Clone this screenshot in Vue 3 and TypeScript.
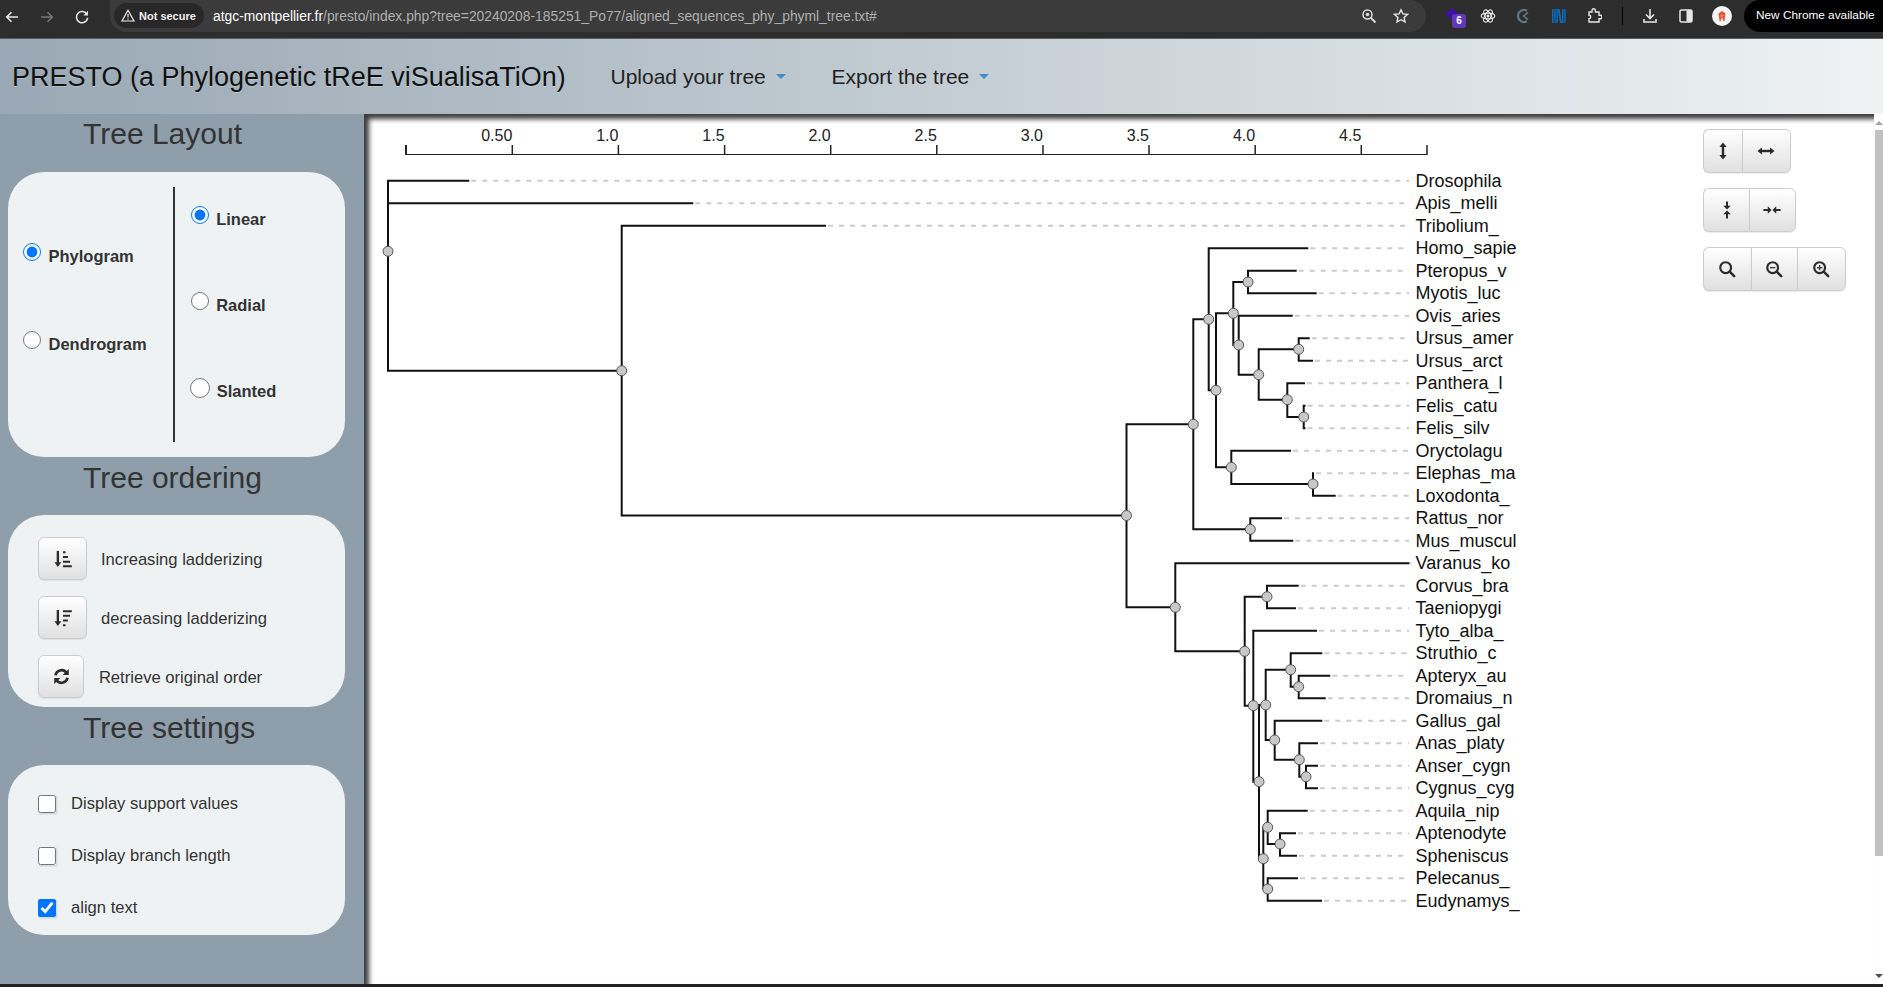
<script setup lang="ts">
interface Inner { id: string; x: number; y: number; parent: string | null }
interface Leaf { name: string; tip: number; parent: string }

const ROW0 = 180.7
const ROW = 22.5
const DASH_END = 1409

const inner: Inner[] = [
  { id: 'root', x: 388, y: 251.3, parent: null },
  { id: 'n1', x: 621.7, y: 370.7, parent: 'root' },
  { id: 'n3', x: 1126.5, y: 515.5, parent: 'n1' },
  { id: 'n4', x: 1193.3, y: 424.3, parent: 'n3' },
  { id: 'a', x: 1208.7, y: 319.3, parent: 'n4' },
  { id: 'b', x: 1216, y: 390.3, parent: 'a' },
  { id: 'c', x: 1233.3, y: 313.3, parent: 'b' },
  { id: 'e', x: 1248, y: 282, parent: 'c' },
  { id: 'f', x: 1238.7, y: 345, parent: 'c' },
  { id: 'g', x: 1258.7, y: 374.7, parent: 'f' },
  { id: 'h', x: 1298.7, y: 349.3, parent: 'g' },
  { id: 'i', x: 1287.3, y: 399.7, parent: 'g' },
  { id: 'j', x: 1303.7, y: 417, parent: 'i' },
  { id: 'd', x: 1231.3, y: 467.3, parent: 'b' },
  { id: 'k', x: 1313, y: 484, parent: 'd' },
  { id: 'l', x: 1250.3, y: 529.3, parent: 'n4' },
  { id: 'n5', x: 1175.3, y: 607.3, parent: 'n3' },
  { id: 'm', x: 1244.7, y: 651.3, parent: 'n5' },
  { id: 'p', x: 1267, y: 596.7, parent: 'm' },
  { id: 'q', x: 1253.3, y: 705.7, parent: 'm' },
  { id: 'r', x: 1259, y: 781.7, parent: 'q' },
  { id: 's', x: 1265.7, y: 705, parent: 'r' },
  { id: 'u', x: 1290.7, y: 669.7, parent: 's' },
  { id: 'w', x: 1298.7, y: 686.7, parent: 'u' },
  { id: 'v', x: 1274.7, y: 740, parent: 's' },
  { id: 'x', x: 1299.3, y: 759.7, parent: 'v' },
  { id: 'y', x: 1306, y: 776.7, parent: 'x' },
  { id: 't', x: 1263.3, y: 858.7, parent: 'r' },
  { id: 'z', x: 1267.7, y: 827.3, parent: 't' },
  { id: 'ab', x: 1280, y: 844, parent: 'z' },
  { id: 'aa', x: 1267.7, y: 889, parent: 't' }
]

const leaves: Leaf[] = [
  { name: 'Drosophila', tip: 469.3, parent: 'root' },
  { name: 'Apis_melli', tip: 693.3, parent: 'root' },
  { name: 'Tribolium_', tip: 826, parent: 'n1' },
  { name: 'Homo_sapie', tip: 1308.3, parent: 'a' },
  { name: 'Pteropus_v', tip: 1296.7, parent: 'e' },
  { name: 'Myotis_luc', tip: 1316.7, parent: 'e' },
  { name: 'Ovis_aries', tip: 1292.7, parent: 'f' },
  { name: 'Ursus_amer', tip: 1309.7, parent: 'h' },
  { name: 'Ursus_arct', tip: 1313, parent: 'h' },
  { name: 'Panthera_l', tip: 1305, parent: 'i' },
  { name: 'Felis_catu', tip: 1305.5, parent: 'j' },
  { name: 'Felis_silv', tip: 1305.5, parent: 'j' },
  { name: 'Oryctolagu', tip: 1291, parent: 'd' },
  { name: 'Elephas_ma', tip: 1314, parent: 'k' },
  { name: 'Loxodonta_', tip: 1335.7, parent: 'k' },
  { name: 'Rattus_nor', tip: 1282, parent: 'l' },
  { name: 'Mus_muscul', tip: 1293.3, parent: 'l' },
  { name: 'Varanus_ko', tip: 1409.3, parent: 'n5' },
  { name: 'Corvus_bra', tip: 1298.7, parent: 'p' },
  { name: 'Taeniopygi', tip: 1296, parent: 'p' },
  { name: 'Tyto_alba_', tip: 1317, parent: 'q' },
  { name: 'Struthio_c', tip: 1322.3, parent: 'u' },
  { name: 'Apteryx_au', tip: 1330.3, parent: 'w' },
  { name: 'Dromaius_n', tip: 1325.7, parent: 'w' },
  { name: 'Gallus_gal', tip: 1322.3, parent: 'v' },
  { name: 'Anas_platy', tip: 1318, parent: 'x' },
  { name: 'Anser_cygn', tip: 1318, parent: 'y' },
  { name: 'Cygnus_cyg', tip: 1318, parent: 'y' },
  { name: 'Aquila_nip', tip: 1307.7, parent: 'z' },
  { name: 'Aptenodyte', tip: 1296, parent: 'ab' },
  { name: 'Spheniscus', tip: 1297, parent: 'ab' },
  { name: 'Pelecanus_', tip: 1298, parent: 'aa' },
  { name: 'Eudynamys_', tip: 1322, parent: 'aa' }
]

const byId = new Map(inner.map((n) => [n.id, n]))
const rowY = (i: number) => ROW0 + ROW * i

const branchPath = [
  ...inner.filter((n) => n.parent).map((n) => {
    const p = byId.get(n.parent as string) as Inner
    return `M${p.x} ${p.y}V${n.y}H${n.x}`
  }),
  ...leaves.map((l, i) => {
    const p = byId.get(l.parent) as Inner
    return `M${p.x} ${p.y}V${rowY(i)}H${l.tip}`
  })
].join('')

const rows = leaves.map((l, i) => ({ name: l.name, tip: l.tip, y: rowY(i) }))

const ticks = [406, 512.3, 618.4, 724.6, 830.7, 936.8, 1043, 1149, 1255.2, 1361.3, 1427]
const tickLabels = ['', '0.50', '1.0', '1.5', '2.0', '2.5', '3.0', '3.5', '4.0', '4.5', '']

type Glyph = 'v' | 'h' | 'sv' | 'sh' | 'z' | 'zo' | 'zi'
const groups: { icon: Glyph; width: number }[][] = [
  [{ icon: 'v', width: 38.4 }, { icon: 'h', width: 49.2 }],
  [{ icon: 'sv', width: 46 }, { icon: 'sh', width: 46.4 }],
  [{ icon: 'z', width: 47.4 }, { icon: 'zo', width: 46.6 }, { icon: 'zi', width: 48.4 }]
]
</script>

<template>
  <div class="page">
    <header class="chrome">
      <div class="nav-btns">
        <svg class="ci" viewBox="0 0 16 16"><path d="M14 8H3M7.5 3.2 2.7 8l4.8 4.8" fill="none" stroke="#e6e6e6" stroke-width="1.6" /></svg>
        <svg class="ci" viewBox="0 0 16 16"><path d="M2 8h11M8.5 3.2 13.3 8l-4.800 4.800" fill="none" stroke="#777" stroke-width="1.6" /></svg>
        <svg class="ci" viewBox="0 0 16 16"><path d="M13 5.500A5.600 5.600 0 1 0 13.600 8.800" fill="none" stroke="#e6e6e6" stroke-width="1.6" /><path d="M14 1.800V6.400H9.400Z" fill="#e6e6e6" /></svg>
      </div>
      <div class="omni">
        <div class="chip">
          <svg class="warn" viewBox="0 0 14 13"><path d="M7 1.300 13 12H1Z" fill="none" stroke="#eee" stroke-width="1.200" /><path d="M7 5v3.500M7 9.500v1.200" stroke="#eee" stroke-width="1.100" /></svg>
          <span>Not secure</span>
        </div>
        <div class="url"><b>atgc-montpellier.fr</b>/presto/index.php?tree=20240208-185251_Po77/aligned_sequences_phy_phyml_tree.txt#</div>
        <svg class="ci omni-ico" viewBox="0 0 16 16"><circle cx="6.500" cy="6.500" r="4.500" fill="none" stroke="#ddd" stroke-width="1.500" /><circle cx="6.500" cy="6.500" r="1.800" fill="#ddd" /><path d="m10 10 4.500 4.500" stroke="#ddd" stroke-width="1.800" /></svg>
        <svg class="ci omni-star" viewBox="0 0 16 16"><path d="m8 1.800 1.900 4.100 4.500.5-3.300 3 .9 4.500L8 11.700l-4 2.200.9-4.500-3.300-3 4.500-.5Z" fill="none" stroke="#e6e6e6" stroke-width="1.400" /></svg>
      </div>
      <div class="exts">
        <div class="ext-stack">
          <svg viewBox="0 0 18 16"><path d="M9 0 17 7 9 13 1 7Z" fill="#3d10a8" /></svg>
          <span class="badge">6</span>
        </div>
        <svg class="ci" viewBox="0 0 16 16"><g fill="none" stroke="#e8e8e8" stroke-width="1.100"><ellipse cx="8" cy="8" rx="6.800" ry="2.900" /><ellipse cx="8" cy="8" rx="6.800" ry="2.900" transform="rotate(60 8 8)" /><ellipse cx="8" cy="8" rx="6.800" ry="2.900" transform="rotate(120 8 8)" /></g><circle cx="8" cy="8" r="1.500" fill="#e8e8e8" /></svg>
        <svg class="ci" viewBox="0 0 16 16"><path d="M12 2.800A6 6 0 1 0 12 13.200" fill="none" stroke="#5f7583" stroke-width="2.200" /><path d="M13 4.500 8.500 8l4.500 3.500" fill="none" stroke="#5f7583" stroke-width="1.600" /></svg>
        <svg class="ci" viewBox="0 0 16 16"><g fill="#0f69b4"><rect x="1" y="1" width="1.500" height="14" /><rect x="3.200" y="1" width="1.500" height="14" /><rect x="5.400" y="1" width="1.500" height="14" /><path d="M6.500 1h2.200l2.400 14H9Z" /><rect x="11" y="1" width="1.500" height="14" /><rect x="13.200" y="1" width="1.500" height="14" /></g></svg>
        <svg class="ci" viewBox="0 0 16 16"><path d="M3 4h3V2.500a1.700 1.700 0 0 1 3.400 0V4H13v3.300h1.300a1.700 1.700 0 0 1 0 3.400H13V14H3v-3.300a1.700 1.700 0 0 0 0-3.400Z" fill="none" stroke="#e6e6e6" stroke-width="1.400" /></svg>
        <span class="sep"></span>
        <svg class="ci" viewBox="0 0 16 16"><path d="M8 1v9M4 6.500 8 10.500l4-4M2 11v3h12v-3" fill="none" stroke="#e6e6e6" stroke-width="1.600" /></svg>
        <svg class="ci" viewBox="0 0 16 16"><rect x="2" y="2" width="12" height="12" rx="1.500" fill="none" stroke="#e6e6e6" stroke-width="1.500" /><rect x="8.500" y="2" width="5.500" height="12" fill="#e6e6e6" /></svg>
        <div class="avatar"><svg viewBox="0 0 20 20"><circle cx="10" cy="10" r="10" fill="#f4f6f7" /><path d="M6.500 7.500 10 5l3.500 2.500L12.500 15h-1.200L10 11l-1.300 4H7.500Z" fill="#e2553a" /><path d="M8.700 8.800h2.600v1.800H8.700Z" fill="#f0a030" /></svg></div>
      </div>
      <div class="update">New Chrome available</div>
    </header>

    <nav class="navbar">
      <span class="brand">PRESTO (a Phylogenetic tReE viSualisaTiOn)</span>
      <span class="menu upload">Upload your tree<i class="caret"></i></span>
      <span class="menu">Export the tree<i class="caret"></i></span>
    </nav>

    <div class="body">
      <aside class="sidebar">
        <h3 class="title">Tree Layout</h3>
        <section class="panel layout">
          <div class="col col-left">
            <label class="radio"><input type="radio" name="mode" checked /><span>Phylogram</span></label>
            <label class="radio"><input type="radio" name="mode" /><span>Dendrogram</span></label>
          </div>
          <div class="divider"></div>
          <div class="col col-right">
            <label class="radio"><input type="radio" name="shape" checked /><span>Linear</span></label>
            <label class="radio"><input type="radio" name="shape" /><span>Radial</span></label>
            <label class="radio big"><input type="radio" name="shape" /><span>Slanted</span></label>
          </div>
        </section>

        <h3 class="title t2">Tree ordering</h3>
        <section class="panel ordering">
          <div class="order-row">
            <button class="btn side-btn">
              <svg viewBox="0 0 20 20" class="sort"><path d="M4.300 1v15" stroke="#2b2b2b" stroke-width="2.600" /><path d="M.5 13.500h7.600L4.300 19Z" fill="#2b2b2b" /><path d="M10 1.500h2.800v2.200H10ZM10 6.800h5.400V9H10ZM10 12h7.800v2.200H10ZM10 17h9.800v2.200H10Z" fill="#2b2b2b" /></svg>
            </button>
            <span>Increasing ladderizing</span>
          </div>
          <div class="order-row">
            <button class="btn side-btn">
              <svg viewBox="0 0 20 20" class="sort"><path d="M4.300 1v15" stroke="#2b2b2b" stroke-width="2.600" /><path d="M.5 13.500h7.600L4.300 19Z" fill="#2b2b2b" /><path d="M10 1.500h9.800v2.200H10ZM10 6.500h7.800v2.200H10ZM10 11.700h5.400v2.200H10ZM10 17h2.800v2.200H10Z" fill="#2b2b2b" /></svg>
            </button>
            <span>decreasing ladderizing</span>
          </div>
          <div class="order-row third">
            <button class="btn side-btn">
              <svg viewBox="0 0 16 16" class="refresh"><path d="M2.300 6.800A5.900 5.900 0 0 1 12.400 4" fill="none" stroke="#2b2b2b" stroke-width="2.500" /><path d="M14.800 .9V6.600H9.100Z" fill="#2b2b2b" /><path d="M13.700 9.200A5.900 5.900 0 0 1 3.600 12" fill="none" stroke="#2b2b2b" stroke-width="2.500" /><path d="M1.200 15.100V9.400H6.900Z" fill="#2b2b2b" /></svg>
            </button>
            <span>Retrieve original order</span>
          </div>
        </section>

        <h3 class="title t3">Tree settings</h3>
        <section class="panel settings">
          <label class="check"><input type="checkbox" /><span>Display support values</span></label>
          <label class="check"><input type="checkbox" /><span>Display branch length</span></label>
          <label class="check"><input type="checkbox" checked /><span>align text</span></label>
        </section>
      </aside>

      <main class="canvas">
        <svg class="tree" viewBox="364 114 1510 870" width="1510" height="870">
          <g class="axis">
            <path d="M406 154.500H1427" />
            <path v-for="(t, i) in ticks" :key="t" :d="`M${t} 145V155`" :stroke-width="i === 0 ? 2 : 1.5" />
            <text v-for="(t, i) in ticks" :key="'l' + t" :x="t" y="141" text-anchor="end">{{ tickLabels[i] }}</text>
          </g>
          <path v-for="r in rows" :key="'d' + r.name" class="dash" :d="`M${r.tip + 2} ${r.y}H${DASH_END}`" />
          <path class="branches" :d="branchPath" />
          <circle v-for="n in inner" :key="n.id" class="node" :cx="n.x" :cy="n.y" r="5" />
          <text v-for="r in rows" :key="'t' + r.name" class="leaf" x="1415.500" :y="r.y + 6">{{ r.name }}</text>
        </svg>

        <div class="tools">
          <div v-for="(g, gi) in groups" :key="gi" class="tool-group">
            <button v-for="b in g" :key="b.icon" class="btn tool" :style="{ width: b.width + 'px' }">
              <svg v-if="b.icon === 'v'" viewBox="0 0 20 20"><path d="M10 3v14" stroke="#2b2b2b" stroke-width="2.700" /><path d="M6 5.500 10 .5l4 5ZM6 14.500 10 19.500l4-5Z" fill="#2b2b2b" /></svg>
              <svg v-else-if="b.icon === 'h'" viewBox="0 0 20 20"><path d="M3 10h14" stroke="#2b2b2b" stroke-width="2.700" /><path d="M5.500 6 .5 10l5 4ZM14.500 6 19.500 10l-5 4Z" fill="#2b2b2b" /></svg>
              <svg v-else-if="b.icon === 'sv'" viewBox="0 0 20 20"><path d="M10 .5v6M10 13.500v6" stroke="#2b2b2b" stroke-width="2.200" /><path d="M5.800 5.300h8.400L10 9.500ZM5.800 14.700h8.400L10 10.500Z" fill="#2b2b2b" /></svg>
              <svg v-else-if="b.icon === 'sh'" viewBox="0 0 20 20"><path d="M.5 10h6M13.500 10h6" stroke="#2b2b2b" stroke-width="2.200" /><path d="M5.300 5.800v8.400L9.500 10ZM14.700 5.800v8.400L10.500 10Z" fill="#2b2b2b" /></svg>
              <svg v-else viewBox="0 0 20 20">
                <circle cx="8.500" cy="8.500" r="6" fill="none" stroke="#2b2b2b" stroke-width="2.400" />
                <path d="m13 13 5 5" stroke="#2b2b2b" stroke-width="2.800" stroke-linecap="round" />
                <path v-if="b.icon === 'zo'" d="M5.500 8.500h6" stroke="#444" stroke-width="1.700" />
                <path v-if="b.icon === 'zi'" d="M5.500 8.500h6M8.500 5.500v6" stroke="#444" stroke-width="1.700" />
              </svg>
            </button>
          </div>
        </div>
      </main>

      <div class="scrollbar">
        <i class="arrow up"></i>
        <div class="thumb"></div>
        <i class="arrow down"></i>
      </div>
    </div>
    <div class="foot"></div>
  </div>
</template>

<style>
html, body { margin: 0; overflow: hidden; }
</style>

<style scoped>
.page {
  width: 1883px;
  height: 987px;
  display: flex;
  flex-direction: column;
  font-family: "Liberation Sans", Arial, sans-serif;
  color: #333;
  overflow: hidden;
}

/* browser chrome */
.chrome {
  height: 39px;
  flex: none;
  box-sizing: border-box;
  display: flex;
  align-items: flex-start;
  background: #2d2d2d;
  border-bottom: 1px solid #5a5d60;
}
.ci { width: 16px; height: 16px; flex: none; }
.nav-btns {
  width: 110px;
  flex: none;
  display: flex;
  gap: 19px;
  padding: 9px 0 0 4px;
  box-sizing: border-box;
}
.omni {
  width: 1316px;
  flex: none;
  height: 32px;
  background: #3b3b3b;
  border-radius: 0 16px 16px 16px;
  display: flex;
  align-items: center;
  padding-left: 4px;
  box-sizing: border-box;
  position: relative;
}
.chip {
  width: 90px;
  height: 25px;
  background: #282828;
  border-radius: 13px;
  display: flex;
  align-items: center;
  box-sizing: border-box;
  padding-left: 7px;
  gap: 4px;
  font: 700 11px "Liberation Sans", Arial, sans-serif;
  color: #f1f1f1;
  flex: none;
  margin-top: -1px;
}
.warn { width: 14px; height: 13px; }
.url {
  margin-left: 9px;
  font: 13.850px "Liberation Sans", Arial, sans-serif;
  color: #b0b0b0;
  white-space: nowrap;
}
.url b { font-weight: 400; color: #fff; }
.omni-ico { margin-left: auto; }
.omni-star { margin: 0 17px 0 16px; }
.exts {
  flex: 1;
  display: flex;
  align-items: center;
  height: 32px;
  padding-left: 18px;
  gap: 19.500px;
}
.exts .ci { margin-left: 0; }
.ext-stack { position: relative; width: 16px; height: 20px; flex: none; }
.ext-stack svg { width: 16px; height: 14px; display: block; margin-top: 2px; }
.badge {
  position: absolute;
  left: 8px;
  top: 8px;
  width: 14px;
  height: 14px;
  background: #5f39b8;
  border-radius: 3px;
  color: #fff;
  font: 700 10px/14px "Liberation Sans", Arial, sans-serif;
  text-align: center;
}
.sep { width: 1px; height: 18px; background: #000; flex: none; }
.avatar { width: 20px; height: 20px; flex: none; margin-left: -1px; }
.avatar svg { width: 20px; height: 20px; display: block; }
.update {
  width: 139px;
  height: 32px;
  flex: none;
  background: #000;
  border-radius: 16px 0 0 16px;
  color: #fff;
  font: 11.800px/31px "Liberation Sans", Arial, sans-serif;
  padding-left: 12px;
  box-sizing: border-box;
  white-space: nowrap;
}

/* navbar */
.navbar {
  height: 75px;
  flex: none;
  box-sizing: border-box;
  display: flex;
  align-items: center;
  padding-left: 12px;
  background: linear-gradient(to right, #99a8b4, #eef2f3);
}
.brand {
  font-size: 27px;
  color: #111;
  text-shadow: 0 1px 0 rgba(255, 255, 255, 0.25);
  white-space: nowrap;
  width: 598.500px;
  flex: none;
  margin-top: 2px;
}
.menu {
  font-size: 21px;
  color: #222;
  white-space: nowrap;
  display: flex;
  align-items: center;
}
.upload { width: 221px; flex: none; }
.caret {
  display: inline-block;
  margin-left: 10px;
  border-top: 5px solid #428bca;
  border-left: 5.500px solid transparent;
  border-right: 5.500px solid transparent;
}

/* layout */
.body { flex: 1; display: flex; min-height: 0; }
.sidebar {
  width: 364px;
  flex: none;
  background: #8e9eab;
  box-sizing: border-box;
  padding: 3px 19px 0 8px;
}
.title {
  margin: 0 0 22px;
  padding-left: 75px;
  font-size: 30px;
  font-weight: 400;
  line-height: 33px;
  color: #333;
}
.t2 { margin-top: 4px; margin-bottom: 21px; }
.t3 { margin-top: 4px; margin-bottom: 21px; }
.panel {
  background: #eef2f3;
  box-sizing: border-box;
  border-radius: 36px;
}
.layout { height: 285px; display: flex; }
.col { display: flex; flex-direction: column; align-items: flex-start; }
.col-left { width: 165px; flex: none; padding: 71px 0 0 15px; box-sizing: border-box; gap: 65px; }
.divider { width: 2px; height: 255px; margin-top: 15px; background: #333; flex: none; }
.col-right { padding: 34px 0 0 15.700px; gap: 63px; }
.radio {
  display: flex;
  align-items: flex-start;
  gap: 7.500px;
  font-size: 16.500px;
  font-weight: 700;
  line-height: 20px;
  color: #333;
}
.radio span { margin-top: 3px; }
.radio input { width: 18px; height: 18px; margin: 0; flex: none; }
.radio.big { margin-left: -1px; gap: 7px; }
.radio.big input { width: 20px; height: 20px; }

.ordering {
  height: 192px;
  padding: 22px 0 0 30px;
  display: flex;
  flex-direction: column;
  gap: 16px;
}
.order-row { display: flex; align-items: center; gap: 14px; font-size: 16.600px; color: #333; }
.order-row span { margin-top: 2px; }
.order-row.third { gap: 14.500px; }
.btn {
  padding: 0;
  border: 1px solid #ccc;
  background: linear-gradient(to bottom, #fff, #e0e0e0);
  box-shadow: inset 0 1px 0 rgba(255, 255, 255, 0.15), 0 1px 1px rgba(0, 0, 0, 0.075);
  display: flex;
  align-items: center;
  justify-content: center;
  box-sizing: border-box;
}
.side-btn { width: 49px; height: 43px; border-radius: 6px; flex: none; }
.third .side-btn { width: 46.400px; }
.sort { width: 18px; height: 18px; }
.refresh { width: 17px; height: 17px; }

.settings {
  height: 170px;
  padding: 30px 0 0 30px;
  display: flex;
  flex-direction: column;
  gap: 34px;
}
.check { display: flex; align-items: center; gap: 15px; font-size: 16.600px; line-height: 18px; color: #333; }
.check input {
  width: 18px;
  height: 18px;
  margin: 0;
  flex: none;
  box-shadow: 1px 1px 2px rgba(0, 0, 0, 0.15);
}

/* canvas */
.canvas {
  position: relative;
  flex: 1;
  min-width: 0;
  background: #fff;
  box-shadow: inset 5px 5px 5px #3c3c3c;
  overflow: hidden;
}
.tree { display: block; font-family: "Liberation Sans", Arial, sans-serif; }
.axis path { stroke: #222; fill: none; }
.axis text { font-size: 16px; fill: #222; }
.dash { stroke: #ccc; stroke-width: 2; stroke-dasharray: 5 6; fill: none; }
.branches { stroke: #111; stroke-width: 2; fill: none; }
.node { fill: #c8c8c8; stroke: #555; stroke-width: 1; }
.leaf { font-size: 18px; fill: #111; }

.tools {
  position: absolute;
  left: 1339.300px;
  top: 15px;
  display: flex;
  flex-direction: column;
  gap: 15.500px;
  align-items: flex-start;
}
.tool-group { display: flex; }
.tool {
  height: 43.500px;
  border-right-width: 0;
}
.tool:first-child { border-radius: 6px 0 0 6px; }
.tool:last-child { border-radius: 0 6px 6px 0; border-right-width: 1px; }
.tool svg { width: 18px; height: 18px; }

.scrollbar {
  width: 9px;
  flex: none;
  background: #fff;
  display: flex;
  flex-direction: column;
  align-items: center;
  position: relative;
}
.thumb { width: 8px; margin-top: 5px; margin-left: 1px; height: 726px; background: #c1c1c1; }
.arrow { display: block; width: 0; height: 0; border-left: 4px solid transparent; border-right: 4px solid transparent; margin-top: 7px; }
.up { border-bottom: 4px solid #a3a3a3; }
.down { border-top: 4px solid #505050; margin-top: auto; margin-bottom: 6px; }
.foot { height: 3px; flex: none; background: #222; }
</style>
